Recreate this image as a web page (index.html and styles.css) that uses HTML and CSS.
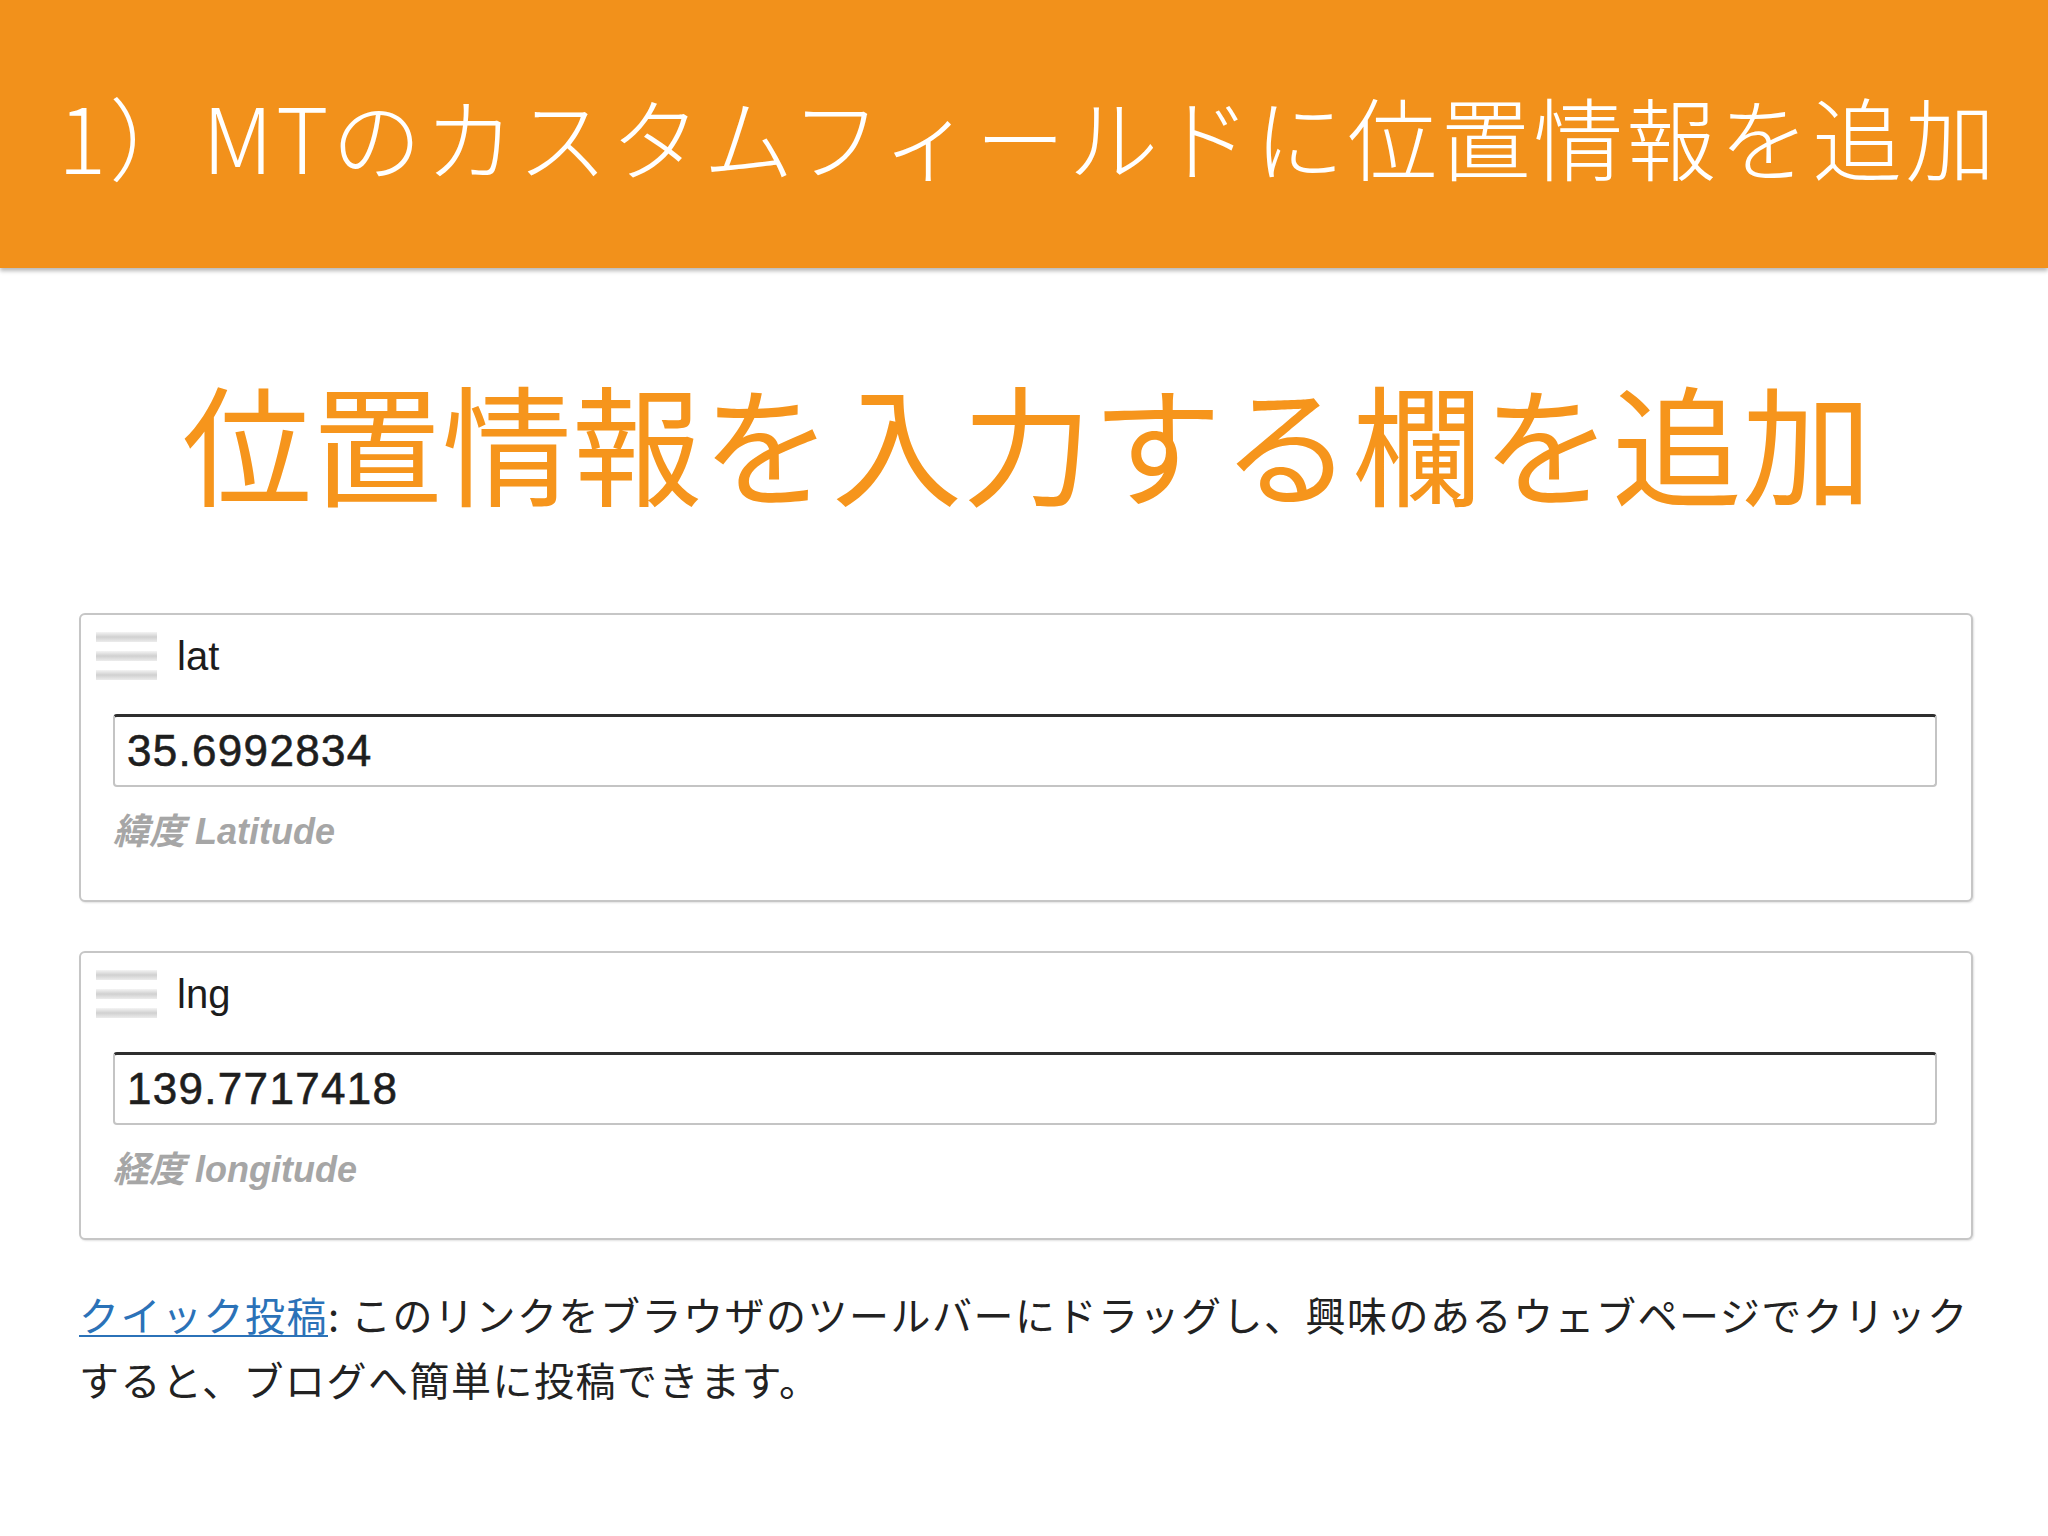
FILE: index.html
```html
<!DOCTYPE html>
<html lang="ja">
<head>
<meta charset="utf-8">
<title>MTのカスタムフィールドに位置情報を追加</title>
<link rel="stylesheet" href="styles.css">
</head>
<body>
<header class="slide-header">
  <h1 class="slide-title">1）MTのカスタムフィールドに位置情報を追加</h1>
</header>
<main class="slide-body">
  <h2 class="lead">位置情報を入力する欄を追加</h2>
  <div class="fields">
    <section class="field">
      <div class="field-head">
        <span class="handle"><i></i><i></i><i></i></span>
        <span class="field-label">lat</span>
      </div>
      <div class="field-body">
        <input class="field-input" type="text" value="35.6992834">
        <p class="field-hint">緯度 Latitude</p>
      </div>
    </section>
    <section class="field">
      <div class="field-head">
        <span class="handle"><i></i><i></i><i></i></span>
        <span class="field-label">lng</span>
      </div>
      <div class="field-body">
        <input class="field-input" type="text" value="139.7717418">
        <p class="field-hint">経度 longitude</p>
      </div>
    </section>
    <p class="quickpost"><a class="quickpost-link" href="#">クイック投稿</a>: このリンクをブラウザのツールバーにドラッグし、興味のあるウェブページでクリックすると、ブログへ簡単に投稿できます。</p>
  </div>
</main>
</body>
</html>
```

FILE: styles.css
```css
html, body {
  margin: 0;
  padding: 0;
  background: #ffffff;
}

body {
  width: 2048px;
  height: 1536px;
  overflow: hidden;
  font-family: "Noto Sans CJK JP", "Noto Sans", sans-serif;
}

.slide-header {
  height: 268px;
  background: #f2911b;
  box-shadow: 0 3px 4px rgba(0, 0, 0, 0.28);
  display: flex;
  align-items: center;
  position: relative;
  z-index: 1;
}

.slide-title {
  margin: 0;
  padding-left: 58px;
  color: #ffffff;
  font-family: "Noto Sans CJK JP", sans-serif;
  font-weight: 300;
  font-size: 90px;
  line-height: 1;
  letter-spacing: 3px;
  white-space: nowrap;
  transform: translateY(1px);
}

.lead {
  margin: 106px 0 109px;
  text-align: center;
  color: #f6951c;
  font-family: "Noto Sans CJK JP", sans-serif;
  font-weight: 400;
  font-size: 130px;
  line-height: 130px;
  letter-spacing: 0;
  padding-left: 6px;
}

.fields {
  margin: 0 75px 0 79px;
}

.field {
  border: 2px solid #c6c6c6;
  border-radius: 6px;
  background: #ffffff;
  margin-bottom: 49px;
  box-shadow: 1px 1px 2px rgba(0, 0, 0, 0.12);
}

.field-head {
  display: flex;
  align-items: flex-start;
  padding: 17px 0 0 15px;
  height: 48px;
}

.handle {
  display: flex;
  flex-direction: column;
  justify-content: space-between;
  width: 61px;
  height: 48px;
}

.handle i {
  display: block;
  height: 10px;
  background: linear-gradient(#f4f4f4, #d0d0d0 50%, #ececec);
}

.field-label {
  margin-left: 20px;
  font-family: "Liberation Sans", Arial, sans-serif;
  font-size: 40px;
  line-height: 48px;
  color: #1c1c1c;
}

.field-body {
  padding: 34px 34px 46px 32px;
}

.field-input {
  display: block;
  box-sizing: border-box;
  width: 100%;
  height: 73px;
  margin: 0;
  padding: 0 12px;
  border: 2px solid #c4c4c4;
  border-top: 3px solid #2e2e2e;
  border-radius: 4px;
  background: #ffffff;
  font-family: "Liberation Sans", Arial, sans-serif;
  font-size: 44px;
  letter-spacing: 1.3px;
  -webkit-text-stroke: 0.6px #1e1e1e;
  color: #1e1e1e;
  outline: none;
}

.field-hint {
  margin: 23px 0 0;
  font-family: "Liberation Sans", Arial, "Noto Sans CJK JP", sans-serif;
  font-style: italic;
  font-weight: 700;
  font-size: 36px;
  line-height: 44px;
  color: #a6a6a6;
  padding-left: 0;
}

.quickpost {
  margin: -7px 0 0;
  font-family: "Noto Sans CJK JP", sans-serif;
  font-size: 40px;
  line-height: 65px;
  letter-spacing: 1.5px;
  color: #222222;
}

.quickpost-link {
  color: #2b72b8;
  text-decoration: underline;
  text-decoration-thickness: 2px;
  text-underline-offset: 4px;
}
```
